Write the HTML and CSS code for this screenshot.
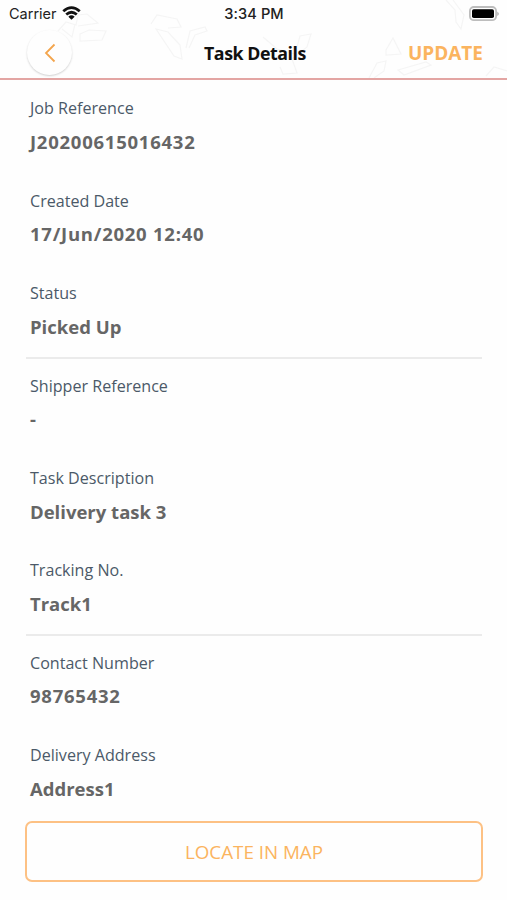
FILE: index.html
```html
<!DOCTYPE html>
<html lang="en">
<head>
<meta charset="utf-8">
<meta name="viewport" content="width=device-width, initial-scale=1">
<title>Task Details</title>
<link rel="stylesheet" href="styles.css">
</head>
<body>
<div class="screen">
  <header class="header">
    <svg class="pattern" viewBox="0 0 507 78" aria-hidden="true">
      <path d="M58 31l8-9 10 3 2-10 9-1 11 9-20 3M80 34l9-4 17 1-4 9-22 1zM62 29l10 8 3-13"/>
      <path d="M151 24l6-9 20 4 4 8-13 1M156 29l12 3 12 13 2 14-8-3zM186 48l4-17 15-4 2 4-12 4-6 13"/>
      <path d="M263 37l14 12 18 5 5-18 11-2-4 13-15 12 5 14-14 1-3-7M267 53l10-4"/>
      <path d="M369 78l8-15 9-2-2 10-10 7M386 50l7-12 4 8 4 8-15 1zM398 70l28-8 5 3-27 10z"/>
      <path d="M446 0l9 10 1 12 5 7 3-14-11-15M486 76l8-9 13 4"/>
    </svg>
    <div class="status">
      <div class="carrier">
        <span>Carrier</span>
        <svg class="wifi" viewBox="0 0 18 14" aria-hidden="true">
          <path d="M1.2 4.9Q9-2 16.8 4.9M4 8Q9 3.6 14 8"/>
          <path class="dot" d="M6 10Q9 7.5 12 10L9 13z"/>
        </svg>
      </div>
      <span class="time">3:34 PM</span>
      <svg class="battery" viewBox="0 0 30 16" aria-hidden="true">
        <rect class="case" x=".9" y="1" width="26.2" height="13.2" rx="4"/>
        <rect class="charge" x="3" y="3.2" width="22" height="8.8" rx="1.8"/>
        <path class="tip" d="M28.3 5.5q3 2.3 0 4.6z"/>
      </svg>
    </div>
    <div class="nav">
      <button class="back" aria-label="Back"><svg viewBox="0 0 12 20"><path d="M10.5 1.5L2 10l8.5 8.5"/></svg></button>
      <h1 class="title">Task Details</h1>
      <button class="update">UPDATE</button>
    </div>
  </header>
  <main class="content">
    <section class="group">
      <div class="field"><div class="label">Job Reference</div><div class="value numeric">J20200615016432</div></div>
      <div class="field"><div class="label">Created Date</div><div class="value numeric">17/Jun/2020 12:40</div></div>
      <div class="field"><div class="label">Status</div><div class="value">Picked Up</div></div>
    </section>
    <section class="group">
      <div class="field"><div class="label">Shipper Reference</div><div class="value">-</div></div>
      <div class="field"><div class="label">Task Description</div><div class="value">Delivery task 3</div></div>
      <div class="field"><div class="label">Tracking No.</div><div class="value">Track1</div></div>
    </section>
    <section class="group">
      <div class="field"><div class="label">Contact Number</div><div class="value numeric">98765432</div></div>
      <div class="field"><div class="label">Delivery Address</div><div class="value">Address1</div></div>
    </section>
  </main>
  <button class="locate">LOCATE IN MAP</button>
</div>
</body>
</html>
```

FILE: styles.css
```css
* { box-sizing: border-box; }
body { margin: 0; background: #fefefe; font-family: "Open Sans", "Noto Sans", sans-serif; }
button { padding: 0; border: 0; background: none; font-family: inherit; }
.screen { height: 900px; display: flex; flex-direction: column; overflow: hidden; }
.header { position: relative; flex: none; height: 80px; border-bottom: 2px solid #e3a5a3; }
.pattern { position: absolute; inset: 0; width: 507px; height: 78px; fill: none; stroke: #f5f5f5; stroke-width: 1.2; }
.status {
  position: relative; height: 28px; padding: 0 8px 0 9px;
  display: grid; grid-template-columns: 1fr auto 1fr; align-items: center;
  font: 500 14px/28px Inter, sans-serif; color: #222;
}
.time { font-size: 14.6px; letter-spacing: .1px; }
.carrier { display: flex; align-items: center; gap: 5px; font-weight: 400; font-size: 14.5px; }
.wifi { width: 19px; height: 15px; margin-top: -2px; fill: none; stroke: #111; stroke-width: 2.6; }
.wifi .dot { fill: #111; stroke: none; }
.battery { width: 30px; height: 16px; margin-top: -1px; justify-self: end; }
.case { fill: #fff; stroke: #bdbdbd; stroke-width: 1.8; }
.charge { fill: #000; }
.tip { fill: #aaa; }
.nav {
  position: relative; height: 50px; padding: 0 24px 0 27px;
  display: grid; grid-template-columns: 1fr auto 1fr; align-items: center;
}
.back {
  width: 45px; height: 45px; margin-top: -1px; border-radius: 50%; background: #fefefe;
  display: flex; align-items: center; justify-content: center;
  box-shadow: 0 1px 2px rgba(0, 0, 0, .18);
}
.back svg { width: 12px; height: 20px; fill: none; stroke: #f3a54d; stroke-width: 1.8; }
.title { margin: 0; font-size: 17.8px; line-height: 24px; font-weight: 700; letter-spacing: -.45px; color: #111; }
.update { justify-self: end; font-size: 19px; line-height: 26px; font-weight: 700; color: #fbb45f; }
.content { flex: none; height: 741px; padding: 0 25px 0 26px; }
.group { height: 277.2px; border-bottom: 2px solid #ebebeb; }
.group:last-child { border: 0; }
.group:first-child { height: 278.6px; padding-top: 1.2px; }
.field { height: 92.4px; padding: 15px 4px 0; }
.label { font-size: 16.1px; line-height: 24px; color: #4b5968; }
.value { margin-top: 7.6px; font-size: 18.5px; line-height: 28px; font-weight: 700; color: #666; }
.numeric { letter-spacing: .75px; }
.locate {
  width: 458px; height: 61px; margin-left: 25px;
  border: 2px solid #fdc184; border-radius: 7px;
  font-size: 18.8px; color: #fbb45f;
}
```
